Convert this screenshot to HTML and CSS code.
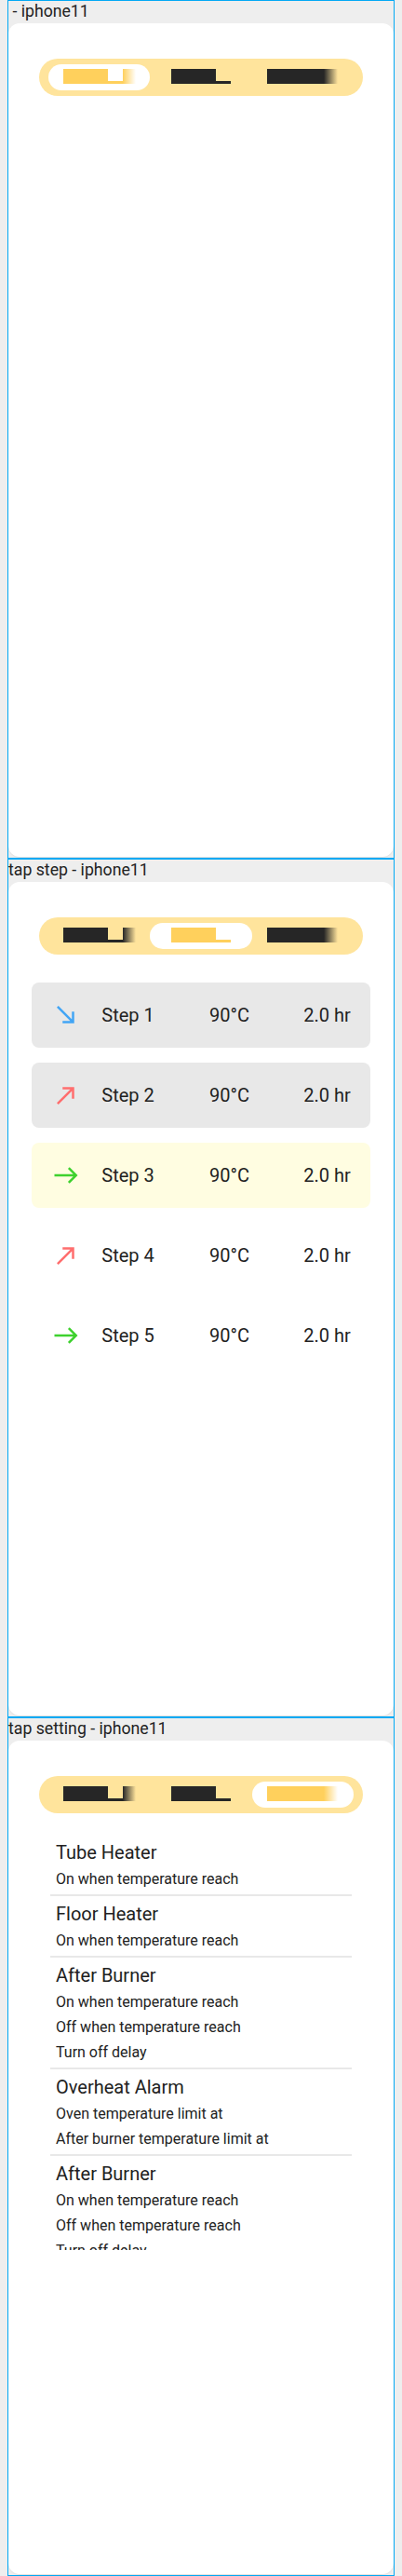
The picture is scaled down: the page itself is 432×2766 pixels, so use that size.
FILE: index.html
```html
<!DOCTYPE html>
<html lang="en">
<head>
<meta charset="utf-8">
<title>iphone11 screens</title>
<link rel="stylesheet" href="styles.css">
</head>
<body>

<section class="frame">
  <div class="frame-title"> - iphone11</div>
  <div class="card">
    <div class="tabs">
      <div class="tab on"><span class="lbl l1" aria-hidden="true"><i class="b"></i><i class="n"></i><i class="f"></i></span></div>
      <div class="tab"><span class="lbl l2" aria-hidden="true"><i class="b"></i><i class="n"></i></span></div>
      <div class="tab"><span class="lbl l3" aria-hidden="true"><i class="b"></i><i class="f"></i></span></div>
    </div>
  </div>
</section>

<section class="frame">
  <div class="frame-title">tap step - iphone11</div>
  <div class="card">
    <div class="tabs">
      <div class="tab"><span class="lbl l1" aria-hidden="true"><i class="b"></i><i class="n"></i><i class="f"></i></span></div>
      <div class="tab on"><span class="lbl l2" aria-hidden="true"><i class="b"></i><i class="n"></i></span></div>
      <div class="tab"><span class="lbl l3" aria-hidden="true"><i class="b"></i><i class="f"></i></span></div>
    </div>
    <div class="steps">
      <div class="step gray">
        <svg class="ico down" viewBox="0 0 24 24"><path d="M19 9h-2v6.59L5.41 4 4 5.41 15.59 17H9v2h10V9z"/></svg>
        <span>Step 1</span><span>90°C</span><span>2.0 hr</span>
      </div>
      <div class="step gray">
        <svg class="ico up" viewBox="0 0 24 24"><path d="M9 5v2h6.59L4 18.59 5.41 20 17 8.41V15h2V5H9z"/></svg>
        <span>Step 2</span><span>90°C</span><span>2.0 hr</span>
      </div>
      <div class="step active">
        <svg class="ico flat" viewBox="0 0 24 24"><path d="M15 5l-1.41 1.41L18.17 11H2v2h16.17l-4.59 4.59L15 19l7-7-7-7z"/></svg>
        <span>Step 3</span><span>90°C</span><span>2.0 hr</span>
      </div>
      <div class="step">
        <svg class="ico up" viewBox="0 0 24 24"><path d="M9 5v2h6.59L4 18.59 5.41 20 17 8.41V15h2V5H9z"/></svg>
        <span>Step 4</span><span>90°C</span><span>2.0 hr</span>
      </div>
      <div class="step">
        <svg class="ico flat" viewBox="0 0 24 24"><path d="M15 5l-1.41 1.41L18.17 11H2v2h16.17l-4.59 4.59L15 19l7-7-7-7z"/></svg>
        <span>Step 5</span><span>90°C</span><span>2.0 hr</span>
      </div>
    </div>
  </div>
</section>

<section class="frame">
  <div class="frame-title">tap setting - iphone11</div>
  <div class="card">
    <div class="tabs">
      <div class="tab"><span class="lbl l1" aria-hidden="true"><i class="b"></i><i class="n"></i><i class="f"></i></span></div>
      <div class="tab"><span class="lbl l2" aria-hidden="true"><i class="b"></i><i class="n"></i></span></div>
      <div class="tab on"><span class="lbl l3" aria-hidden="true"><i class="b"></i><i class="f"></i></span></div>
    </div>
    <div class="settings">
      <div class="set">
        <div class="set-title">Tube Heater</div>
        <div class="set-sub">On when temperature reach</div>
      </div>
      <div class="set">
        <div class="set-title">Floor Heater</div>
        <div class="set-sub">On when temperature reach</div>
      </div>
      <div class="set">
        <div class="set-title">After Burner</div>
        <div class="set-sub">On when temperature reach</div>
        <div class="set-sub">Off when temperature reach</div>
        <div class="set-sub">Turn off delay</div>
      </div>
      <div class="set">
        <div class="set-title">Overheat Alarm</div>
        <div class="set-sub">Oven temperature limit at</div>
        <div class="set-sub">After burner temperature limit at</div>
      </div>
      <div class="set">
        <div class="set-title">After Burner</div>
        <div class="set-sub">On when temperature reach</div>
        <div class="set-sub">Off when temperature reach</div>
        <div class="set-sub">Turn off delay</div>
      </div>
    </div>
  </div>
</section>

</body>
</html>
```

FILE: styles.css
```css
html, body {
  background: #eeeeee;
}
body {
  margin: 0 8px;
  font-family: Roboto, "Liberation Sans", Arial, sans-serif;
  color: #212121;
}

.frame {
  box-sizing: border-box;
  height: 922px;
  border: 1px solid #03a9f4;
  display: flex;
  flex-direction: column;
  background: #eeeeee;
}

.frame-title {
  height: 24px;
  line-height: 23px;
  font-size: 17.7px;
  white-space: pre;
  color: #222222;
  flex: none;
}

.card {
  box-sizing: border-box;
  height: 895px;
  flex: none;
  background: #ffffff;
  border-radius: 12px;
  padding-top: 38px;
  box-shadow: 0 1px 1px rgba(0, 0, 0, 0.06);
}

/* tab bar */
.tabs {
  box-sizing: border-box;
  width: 348px;
  height: 40px;
  margin: 0 auto;
  padding: 6px 10px;
  border-radius: 20px;
  background: #ffe49c;
  display: flex;
}
.tab {
  flex: 1;
  box-sizing: border-box;
  height: 28px;
  border-radius: 14px;
  display: flex;
  justify-content: center;
  align-items: flex-start;
  padding-top: 5px;
}
.tab.on {
  background: #ffffff;
}

.lbl {
  --c: #262626;
  display: flex;
  align-items: flex-end;
  height: 16px;
}
.tab.on .lbl {
  --c: #ffd05c;
}
.lbl i {
  display: block;
}
.lbl .b {
  height: 16px;
  background: var(--c);
}
.lbl .n {
  height: 3px;
  background: var(--c);
}
.lbl .f {
  height: 16px;
  background: linear-gradient(to right, var(--c), rgba(255, 255, 255, 0));
}
.l1 .b { width: 48px; }
.l1 .n { width: 16px; }
.l1 .f { width: 14px; }
.l2 .b { width: 48px; }
.l2 .n { width: 16px; }
.l3 .b { width: 61px; }
.l3 .f { width: 15px; }

/* steps */
.steps {
  margin: 30px 25px 0;
  display: flex;
  flex-direction: column;
  gap: 16px;
}
.step {
  box-sizing: border-box;
  height: 70px;
  border-radius: 8px;
  padding-left: 21.5px;
  display: grid;
  grid-template-columns: 53.8px 115.7px 101.3px 1fr;
  align-items: center;
  font-size: 20px;
  color: #222222;
}
.step.gray {
  background: #e8e8e8;
}
.step.active {
  background: #fffde1;
}
.ico {
  width: 30px;
  height: 30px;
  display: block;
}
.ico.down { fill: #42a5f5; }
.ico.up { fill: #ff6e6e; }
.ico.flat { fill: #3ed12e; }

/* settings */
.settings {
  width: 324px;
  height: 446px;
  margin: 23px auto 0;
  overflow: hidden;
}
.set {
  padding: 4px 0 3px 6px;
  border-bottom: 2px solid #e8e8e8;
}
.set-title {
  font-size: 20px;
  line-height: 30px;
  color: #212121;
}
.set-sub {
  font-size: 16px;
  line-height: 27px;
  color: #222222;
}
```
